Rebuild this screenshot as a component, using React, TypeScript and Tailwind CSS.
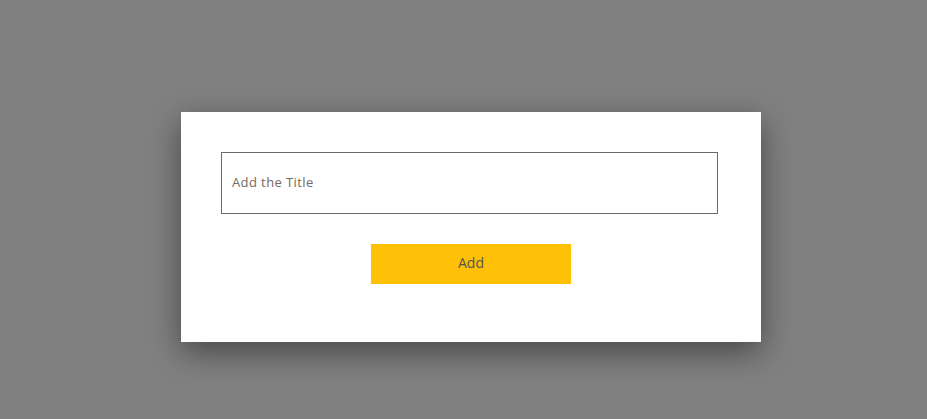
export default function App() {
  return (
    <div
      className="w-full h-[419px] bg-[#808080] pt-[112px] pl-[181px]"
      style={{ fontFamily: '"Open Sans", "Liberation Sans", sans-serif' }}
    >
      <div className="w-[580px] h-[230px] bg-white pt-[40px] pl-[40px] shadow-[0_10px_30px_rgba(0,0,0,0.45)]">
        <input
          type="text"
          placeholder="Add the Title"
          className="block w-[497px] h-[62px] border border-[#6b6b6b] px-[10px] pb-[2px] text-[13px] tracking-[0.4px] text-[#333] placeholder:text-[#76695f] outline-none"
        />
        <div className="w-[497px] flex justify-center pt-[30px] pl-[3px]">
          <button className="w-[200px] h-[40px] bg-[#ffc107] text-[#555] text-[14px] pb-[3px]">Add</button>
        </div>
      </div>
    </div>
  );
}
